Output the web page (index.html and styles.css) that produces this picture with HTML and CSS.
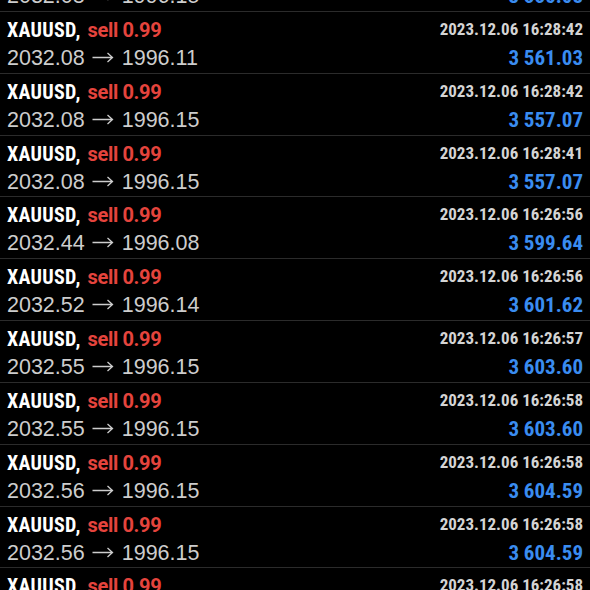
FILE: index.html
```html
<!DOCTYPE html>
<html>
<head>
<meta charset="utf-8">
<link rel="stylesheet" href="styles.css">
</head>
<body>
<div class="list">
  <div class="row">
    <div class="left"><div class="title">XAUUSD, <span class="sell">sell 0.99</span></div><div class="price">2032.08<svg class="arrow" viewBox="0 0 22 12"><path d="M0.5 6.5H20.5M15.5 2L20.5 6.5L15.5 11"/></svg>1996.15</div></div>
    <div class="right"><div class="time">2023.12.06 16:28:43</div><div class="profit">3 556.08</div></div>
  </div>
  <div class="row">
    <div class="left"><div class="title">XAUUSD, <span class="sell">sell 0.99</span></div><div class="price">2032.08<svg class="arrow" viewBox="0 0 22 12"><path d="M0.5 6.5H20.5M15.5 2L20.5 6.5L15.5 11"/></svg>1996.11</div></div>
    <div class="right"><div class="time">2023.12.06 16:28:42</div><div class="profit">3 561.03</div></div>
  </div>
  <div class="row">
    <div class="left"><div class="title">XAUUSD, <span class="sell">sell 0.99</span></div><div class="price">2032.08<svg class="arrow" viewBox="0 0 22 12"><path d="M0.5 6.5H20.5M15.5 2L20.5 6.5L15.5 11"/></svg>1996.15</div></div>
    <div class="right"><div class="time">2023.12.06 16:28:42</div><div class="profit">3 557.07</div></div>
  </div>
  <div class="row">
    <div class="left"><div class="title">XAUUSD, <span class="sell">sell 0.99</span></div><div class="price">2032.08<svg class="arrow" viewBox="0 0 22 12"><path d="M0.5 6.5H20.5M15.5 2L20.5 6.5L15.5 11"/></svg>1996.15</div></div>
    <div class="right"><div class="time">2023.12.06 16:28:41</div><div class="profit">3 557.07</div></div>
  </div>
  <div class="row">
    <div class="left"><div class="title">XAUUSD, <span class="sell">sell 0.99</span></div><div class="price">2032.44<svg class="arrow" viewBox="0 0 22 12"><path d="M0.5 6.5H20.5M15.5 2L20.5 6.5L15.5 11"/></svg>1996.08</div></div>
    <div class="right"><div class="time">2023.12.06 16:26:56</div><div class="profit">3 599.64</div></div>
  </div>
  <div class="row">
    <div class="left"><div class="title">XAUUSD, <span class="sell">sell 0.99</span></div><div class="price">2032.52<svg class="arrow" viewBox="0 0 22 12"><path d="M0.5 6.5H20.5M15.5 2L20.5 6.5L15.5 11"/></svg>1996.14</div></div>
    <div class="right"><div class="time">2023.12.06 16:26:56</div><div class="profit">3 601.62</div></div>
  </div>
  <div class="row">
    <div class="left"><div class="title">XAUUSD, <span class="sell">sell 0.99</span></div><div class="price">2032.55<svg class="arrow" viewBox="0 0 22 12"><path d="M0.5 6.5H20.5M15.5 2L20.5 6.5L15.5 11"/></svg>1996.15</div></div>
    <div class="right"><div class="time">2023.12.06 16:26:57</div><div class="profit">3 603.60</div></div>
  </div>
  <div class="row">
    <div class="left"><div class="title">XAUUSD, <span class="sell">sell 0.99</span></div><div class="price">2032.55<svg class="arrow" viewBox="0 0 22 12"><path d="M0.5 6.5H20.5M15.5 2L20.5 6.5L15.5 11"/></svg>1996.15</div></div>
    <div class="right"><div class="time">2023.12.06 16:26:58</div><div class="profit">3 603.60</div></div>
  </div>
  <div class="row">
    <div class="left"><div class="title">XAUUSD, <span class="sell">sell 0.99</span></div><div class="price">2032.56<svg class="arrow" viewBox="0 0 22 12"><path d="M0.5 6.5H20.5M15.5 2L20.5 6.5L15.5 11"/></svg>1996.15</div></div>
    <div class="right"><div class="time">2023.12.06 16:26:58</div><div class="profit">3 604.59</div></div>
  </div>
  <div class="row">
    <div class="left"><div class="title">XAUUSD, <span class="sell">sell 0.99</span></div><div class="price">2032.56<svg class="arrow" viewBox="0 0 22 12"><path d="M0.5 6.5H20.5M15.5 2L20.5 6.5L15.5 11"/></svg>1996.15</div></div>
    <div class="right"><div class="time">2023.12.06 16:26:58</div><div class="profit">3 604.59</div></div>
  </div>
  <div class="row">
    <div class="left"><div class="title">XAUUSD, <span class="sell">sell 0.99</span></div><div class="price">2032.56<svg class="arrow" viewBox="0 0 22 12"><path d="M0.5 6.5H20.5M15.5 2L20.5 6.5L15.5 11"/></svg>1996.15</div></div>
    <div class="right"><div class="time">2023.12.06 16:26:58</div><div class="profit">3 604.59</div></div>
  </div>
</div>
</body>
</html>
```
FILE: styles.css
```css
html, body {
  margin: 0;
  padding: 0;
  background: #000;
  overflow: hidden;
}
.list {
  margin-top: -50px;
  font-family: "Roboto", "Liberation Sans", Arial, sans-serif;
}
.row {
  box-sizing: border-box;
  height: 61.85px;
  border-bottom: 1px solid #2b2b2b;
  display: flex;
  justify-content: space-between;
  padding: 0 7px;
}
.left, .right {
  display: flex;
  flex-direction: column;
}
.right {
  align-items: flex-end;
}
.title {
  font-weight: bold;
  font-size: 20px;
  line-height: 20px;
  margin-top: 8px;
  color: #fff;
  font-stretch: 75%;
  letter-spacing: 0.3px;
  white-space: nowrap;
}
.sell {
  color: #e5443d;
  font-stretch: 100%;
  letter-spacing: -0.35px;
  margin-left: 2px;
}
.price {
  font-family: "Liberation Sans", Arial, sans-serif;
  font-size: 21.5px;
  line-height: 21.5px;
  margin-top: 8px;
  color: #cdcdcd;
  white-space: nowrap;
}
.arrow {
  width: 22px;
  height: 12px;
  margin: 0 8px 0 7px;
  vertical-align: 2px;
  fill: none;
  stroke: #cdcdcd;
  stroke-width: 1.3;
}
.time {
  font-weight: bold;
  font-size: 17px;
  line-height: 17px;
  margin-top: 9px;
  color: #d4d4d4;
  font-stretch: 75%;
  white-space: nowrap;
}
.profit {
  font-weight: bold;
  font-size: 21px;
  line-height: 21px;
  margin-top: 10px;
  color: #3a8cf0;
  font-stretch: 75%;
  white-space: nowrap;
}
```
